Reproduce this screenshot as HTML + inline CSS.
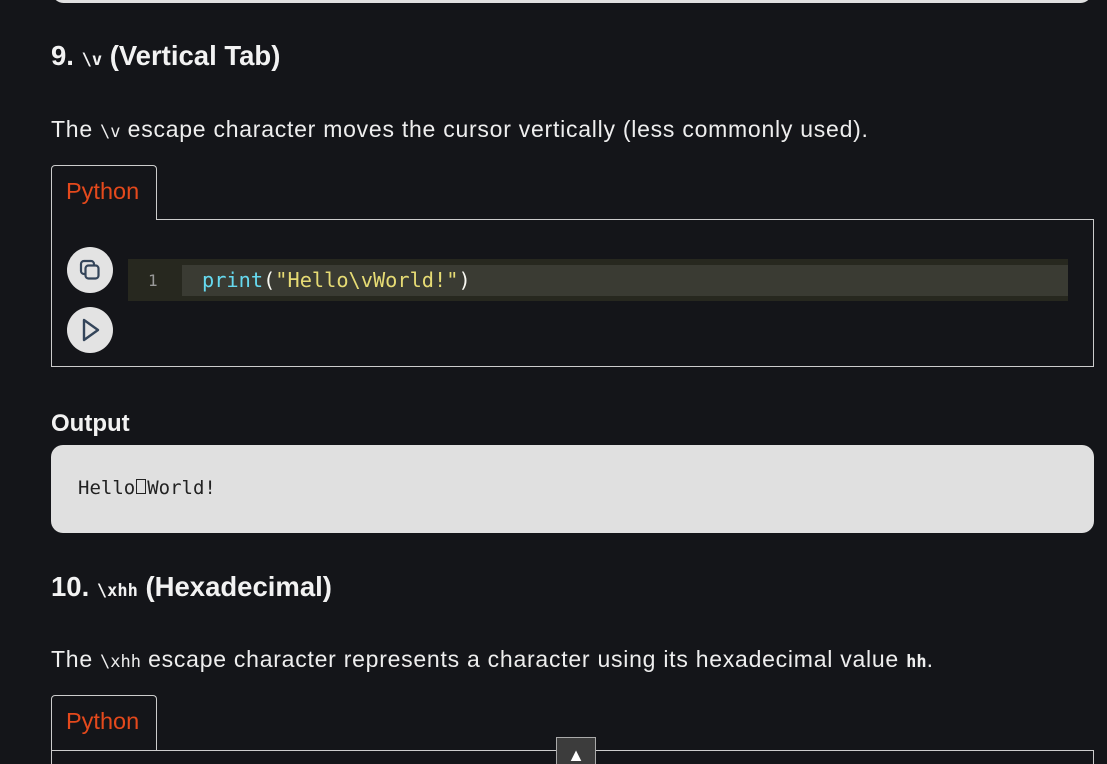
<!DOCTYPE html>
<html><head><meta charset="utf-8"><style>
*{margin:0;padding:0;box-sizing:border-box}
html,body{width:1107px;height:764px;overflow:hidden}
body{background:#141519;color:#f0f0f0;font-family:"Liberation Sans",sans-serif;position:relative}
.a{position:absolute}
h2{position:absolute;left:51px;font-size:27.5px;font-weight:bold;color:#f2f2f2;white-space:nowrap}
h2 code{font-family:"DejaVu Sans Mono","Liberation Mono",monospace;font-size:17px;font-weight:bold}
p{position:absolute;left:51px;font-size:23px;letter-spacing:0.75px;color:#eee;white-space:nowrap}
p code{font-family:"DejaVu Sans Mono","Liberation Mono",monospace;font-size:17px;letter-spacing:0}
.tab{position:absolute;left:51px;width:106px;height:55px;border:1px solid #ccc;border-bottom:none;border-radius:4px 4px 0 0;background:#141519;color:#e4491c;font-size:23.5px;padding:12px 0 0 14px;z-index:2}
.box{position:absolute;left:51px;width:1043px;border:1px solid #ccc}
.circ{position:absolute;left:67px;width:46px;height:46px;border-radius:50%;background:#e3e3e3}
</style></head><body>
<div class="a" style="left:52px;top:-20px;width:1040px;height:23px;background:#e0e0e0;border-radius:12px"></div>
<h2 style="top:40px">9. <code>\v</code> (Vertical Tab)</h2>
<p style="top:116px">The <code>\v</code> escape character moves the cursor vertically (less commonly used).</p>
<div class="tab" style="top:165px">Python</div>
<div class="box" style="top:219px;height:148px"></div>
<div class="circ" style="top:247px"><svg width="46" height="46" viewBox="0 0 46 46" fill="none" stroke="#34455a" stroke-width="2.2"><rect x="14" y="14" width="13" height="13" rx="3"/><rect x="18.5" y="18.5" width="13" height="13" rx="3" fill="#e3e3e3"/></svg></div>
<div class="circ" style="top:307px"><svg width="46" height="46" viewBox="0 0 46 46" fill="none" stroke="#34455a" stroke-width="2.4" stroke-linejoin="round"><path d="M17 13 L31 23 L17 33 Z"/></svg></div>
<div class="a" style="left:128px;top:259px;width:940px;height:42px;background:#27281f"></div>
<div class="a" style="left:182px;top:265px;width:886px;height:31px;background:#3a3b33"></div>
<div class="a" style="left:148px;top:271px;font-family:'DejaVu Sans Mono',monospace;font-size:16px;color:#999">1</div>
<div class="a" style="left:202px;top:268px;font-family:'DejaVu Sans Mono',monospace;font-size:20.3px;white-space:nowrap"><span style="color:#66d9ef">print</span><span style="color:#f8f8f2">(</span><span style="color:#e6db74">"Hello\vWorld!"</span><span style="color:#f8f8f2">)</span></div>
<div class="a" style="left:51px;top:410px;font-size:24px;font-weight:bold;color:#f2f2f2">Output</div>
<div class="a" style="left:51px;top:445px;width:1043px;height:88px;background:#e0e0e0;border-radius:12px"></div>
<div class="a" style="left:78px;top:477px;font-family:'DejaVu Sans Mono',monospace;font-size:19px;color:#222;white-space:nowrap">Hello<span style="display:inline-block;width:10px;height:15px;border:1px solid #222;margin:0 1px"></span>World!</div>
<h2 style="top:571px">10. <code>\xhh</code> (Hexadecimal)</h2>
<p style="top:646px">The <code>\xhh</code> escape character represents a character using its hexadecimal value <code style="font-weight:bold">hh</code>.</p>
<div class="tab" style="top:695px">Python</div>
<div class="box" style="top:750px;height:40px"></div>
<div class="a" style="left:556px;top:737px;width:40px;height:30px;background:#3c3c3c;border:1px solid #aaa;z-index:3;color:#fff;font-size:18px;text-align:center;line-height:34px">▲</div>
</body></html>
